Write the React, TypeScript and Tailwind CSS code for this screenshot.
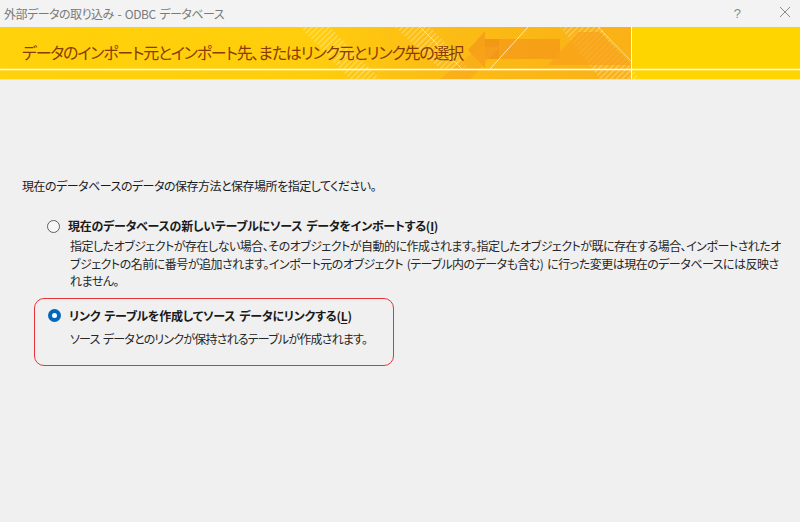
import React from "react";

const jp = "font-['Yu_Gothic_UI','Noto_Sans_CJK_JP',sans-serif] [font-feature-settings:'palt']";

function Banner() {
  return (
    <div className="relative h-[52px] w-full bg-[#ffd500] overflow-hidden">
      <svg className="absolute left-0 top-0" width="800" height="52" viewBox="0 0 800 52">
        <defs>
          <linearGradient id="g1" x1="0" x2="1" y1="0" y2="0">
            <stop offset="0" stopColor="#ffd20a" />
            <stop offset="0.5" stopColor="#ffcd0c" />
            <stop offset="0.68" stopColor="#fcbd14" />
            <stop offset="1" stopColor="#f9b117" />
          </linearGradient>
          <pattern id="hatch" width="4" height="4" patternUnits="userSpaceOnUse" patternTransform="rotate(45)">
            <rect width="1.2" height="4" fill="#ffffff" fillOpacity="0.35" />
          </pattern>
        </defs>
        <rect x="0" y="0" width="631" height="52" fill="url(#g1)" />
        <polygon points="300,0 330,0 380,52 350,52" fill="url(#hatch)" />
        <polygon points="395,0 430,0 470,42 440,42" fill="url(#hatch)" />
        <polygon points="560,0 600,0 640,52 600,52" fill="url(#hatch)" />
        <polygon points="468,23 485,4 485,12 560,12 560,32 485,32 485,41" fill="#f59c18" fillOpacity="0.85" />
        <rect x="485" y="12" width="14" height="20" fill="#f29316" fillOpacity="0.6" />
        <polygon points="548,38 578,5 600,5 631,38" fill="#f8a31b" fillOpacity="0.75" />
        <polygon points="440,52 470,52 500,20 480,20" fill="#f7a41b" fillOpacity="0.5" />
        <line x1="490" y1="42" x2="528" y2="0" stroke="#fff" strokeOpacity="0.7" strokeWidth="1" />
        <line x1="420" y1="0" x2="462" y2="42" stroke="#fff" strokeOpacity="0.5" strokeWidth="1" />
        <line x1="598" y1="0" x2="631" y2="34" stroke="#fff" strokeOpacity="0.5" strokeWidth="1" />
        <line x1="631.5" y1="0" x2="631.5" y2="52" stroke="#fff" strokeWidth="1" />
        <line x1="0" y1="42.5" x2="800" y2="42.5" stroke="#fff" strokeWidth="1.5" />
      </svg>
      <div className={`relative pl-[22px] pt-[14px] text-[16px] leading-[22px] tracking-[-1.2px] text-[#8a3c00] ${jp}`}>
        データのインポート元とインポート先、またはリンク元とリンク先の選択
      </div>
    </div>
  );
}

function Radio({ checked }: { checked?: boolean }) {
  if (checked) {
    return (
      <span className="flex h-[13px] w-[13px] shrink-0 items-center justify-center rounded-full bg-[#0067c0]">
        <span className="h-[5px] w-[5px] rounded-full bg-white" />
      </span>
    );
  }
  return <span className="h-[13px] w-[13px] shrink-0 rounded-full border border-[#5f5f5f] bg-[#f7f7f7]" />;
}

export default function App() {
  return (
    <div className={`h-[522px] w-[800px] bg-[#f0f0f0] ${jp} text-[#1a1a1a]`}>
      <div className="flex h-[27px] items-center bg-[#f3f3f3] pl-[4px] pr-[9px]">
        <span className="text-[12px] tracking-[-0.5px] [word-spacing:1.5px] text-[#7a7a7a]">外部データの取り込み - ODBC データベース</span>
        <span className="ml-auto mr-[38px] font-['Segoe_UI','Liberation_Sans',sans-serif] text-[13px] text-[#8a8a8a]">?</span>
        <svg width="12" height="12" viewBox="0 0 12 12" className="mb-[3px]">
          <path d="M1 1 L11 11 M11 1 L1 11" stroke="#8a8a8a" strokeWidth="1" />
        </svg>
      </div>
      <Banner />
      <div className="h-px bg-[#e2e2e2]" />
      <div className="flex flex-col pl-[22px] pt-[97px] text-[12px] leading-[18px] tracking-[-0.5px] [word-spacing:1.5px]">
        <div>現在のデータベースのデータの保存方法と保存場所を指定してください。</div>
        <div className="mt-[22px] flex items-center gap-[8px] pl-[25px]">
          <Radio />
          <span className="font-bold tracking-[-0.25px]">
            現在のデータベースの新しいテーブルにソース データをインポートする(<span className="underline underline-offset-2">I</span>)
          </span>
        </div>
        <div className="mt-[2px] pl-[48px] leading-[17.5px] text-[#262626] whitespace-nowrap">
          指定したオブジェクトが存在しない場合、そのオブジェクトが自動的に作成されます。指定したオブジェクトが既に存在する場合、インポートされたオ
          <br />
          ブジェクトの名前に番号が追加されます。インポート元のオブジェクト (テーブル内のデータも含む) に行った変更は現在のデータベースには反映さ
          <br />
          れません。
        </div>
        <div className="ml-[12px] mt-[8px] flex h-[68px] w-[360px] flex-col rounded-[10px] border border-[#e8323a] pl-[13px] pt-[8px]">
          <div className="flex items-center gap-[8px]">
            <Radio checked />
            <span className="font-bold tracking-[-0.25px]">
              リンク テーブルを作成してソース データにリンクする(<span className="underline underline-offset-2">L</span>)
            </span>
          </div>
          <div className="mt-[5px] pl-[22px] tracking-[-0.8px] text-[#262626]">ソース データとのリンクが保持されるテーブルが作成されます。</div>
        </div>
      </div>
    </div>
  );
}
